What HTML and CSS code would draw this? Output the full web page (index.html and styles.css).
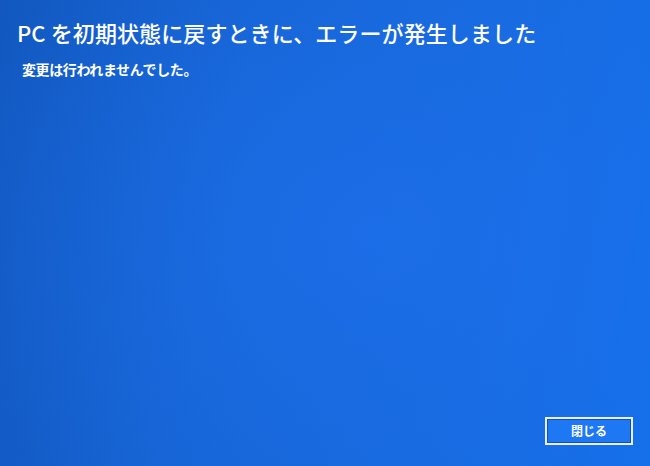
FILE: index.html
```html
<!DOCTYPE html>
<html lang="ja">
<head>
<meta charset="utf-8">
<link rel="stylesheet" href="styles.css">
</head>
<body>
<div class="screen">
  <div class="content">
    <h1 class="title">PC を初期状態に戻すときに、エラーが発生しました</h1>
    <p class="subtitle">変更は行われませんでした。</p>
  </div>
  <div class="actions">
    <button class="btn">閉じる</button>
  </div>
</div>
</body>
</html>
```
FILE: styles.css
```css
html, body {
  margin: 0;
  padding: 0;
  width: 650px;
  height: 466px;
  overflow: hidden;
}
body {
  font-family: "Noto Sans CJK JP", "Noto Sans", sans-serif;
  color: #fff;
}
.screen {
  width: 650px;
  height: 466px;
  box-sizing: border-box;
  display: flex;
  flex-direction: column;
  justify-content: space-between;
  background:
    radial-gradient(ellipse 460px 340px at 58% 50%, rgba(30,112,238,0.65), rgba(30,112,238,0) 100%),
    linear-gradient(100deg, #1258c0 0%, #1664d4 35%, #186ade 70%, #1470ea 100%);
  padding: 17px 17px 21px 17px;
}
.content {
  display: flex;
  flex-direction: column;
}
.title {
  margin: 0;
  font-size: 22px;
  font-weight: 500;
  line-height: 30px;
  letter-spacing: 0.1px;
  white-space: nowrap;
}
.subtitle {
  margin: 12px 0 0 5px;
  font-size: 14px;
  font-weight: 700;
  line-height: 20px;
  letter-spacing: -0.4px;
}
.actions {
  display: flex;
  justify-content: flex-end;
}
.btn {
  width: 88px;
  height: 28px;
  box-sizing: border-box;
  border: 2px solid #e8f0ff;
  outline: none;
  box-shadow: inset 0 0 0 1px #1450b0;
  background: #1e78f4;
  color: #fff;
  font-family: "Noto Sans CJK JP", sans-serif;
  font-size: 12px;
  font-weight: 700;
  padding: 0;
  line-height: 20px;
}
```
